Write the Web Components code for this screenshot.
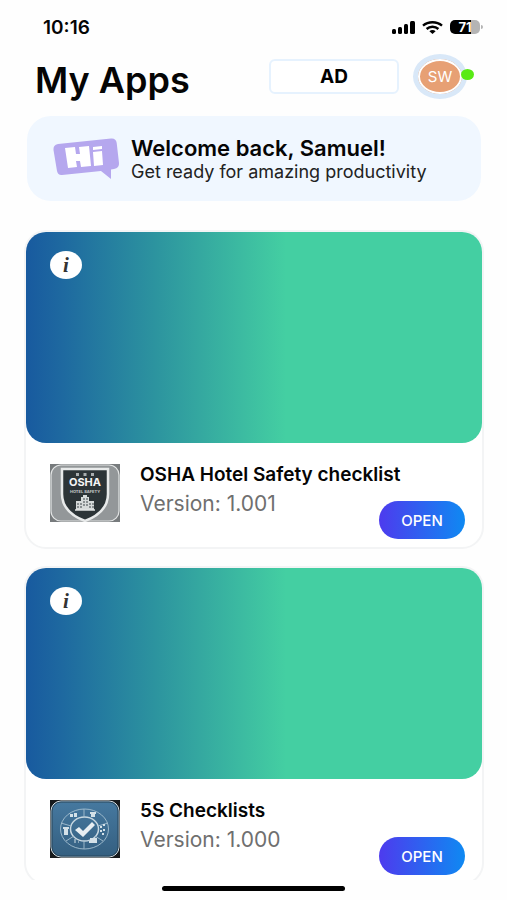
<!DOCTYPE html>
<html lang="en">
<head>
<meta charset="utf-8">
<meta name="viewport" content="width=device-width, initial-scale=1">
<title>My Apps</title>
<style>
    html, body {
        height: 100%;
        margin: 0;
    }
    body {
        background: #fefefe;
        color: #050505;
        font-family: Inter, "Liberation Sans", sans-serif;
    }
</style>
</head>
<body>
<apps-screen></apps-screen>
<script>
class PhoneStatus extends HTMLElement {
    constructor() {
        super();
        this.attachShadow({ mode: 'open' });
    }

    connectedCallback() {
        this.shadowRoot.innerHTML = `
            <style>
                :host {
                    display: flex;
                    align-items: center;
                    justify-content: space-between;
                    height: 52px;
                    padding: 2px 24px 0 43px;
                    box-sizing: border-box;
                }
                time {
                    font-size: 19px;
                    font-weight: 600;
                }
                .signals {
                    display: flex;
                    align-items: center;
                    gap: 7px;
                }
                svg {
                    display: block;
                }
                .battery {
                    display: flex;
                    align-items: center;
                }
                .level {
                    width: 30px;
                    height: 14px;
                    border-radius: 5px;
                    background: linear-gradient(to right, #000 71%, #b4b4b4 71%);
                    color: #fff;
                    font-size: 13px;
                    font-weight: 700;
                    line-height: 14px;
                    text-align: center;
                }
                .tip {
                    width: 2px;
                    height: 4px;
                    margin-left: 1px;
                    border-radius: 0 2px 2px 0;
                    background: #b4b4b4;
                }
            </style>
            <time>10:16</time>
            <div class="signals">
                <svg width="23" height="13" viewBox="0 0 23 13" aria-label="Signal">
                    <rect x="0" y="8" width="4" height="5" rx="1.5"/>
                    <rect x="6" y="6" width="4" height="7" rx="1.5"/>
                    <rect x="12" y="3" width="4" height="10" rx="1.5"/>
                    <rect x="18" y="0" width="5" height="13" rx="1.5"/>
                </svg>
                <svg width="21" height="13" viewBox="0 0 21 13" fill="none" stroke="#000" stroke-width="2.4" aria-label="Wi-Fi">
                    <path d="M1 4.6C6.3.1 14.7.1 20 4.6"/>
                    <path d="M4.6 8c3.3-3 8.5-3 11.8 0"/>
                    <path d="M7.4 10.2c1.7-1.5 4.5-1.5 6.2 0L10.5 13z" fill="#000" stroke="none"/>
                </svg>
                <div class="battery"><div class="level">71</div><div class="tip"></div></div>
            </div>
        `;
    }
}

class UserAvatar extends HTMLElement {
    constructor() {
        super();
        this.attachShadow({ mode: 'open' });
    }

    connectedCallback() {
        this.shadowRoot.innerHTML = `
            <style>
                :host {
                    display: block;
                    position: relative;
                }
                button {
                    display: block;
                    width: 54px;
                    height: 45px;
                    padding: 0;
                    border: 5px solid #d9e8f8;
                    border-radius: 50%;
                    background: #e7a074;
                    box-shadow: inset 0 0 0 2px #fff;
                    color: #fff;
                    font: 400 15px Inter, sans-serif;
                }
                .online {
                    position: absolute;
                    right: -7px;
                    top: 15px;
                    width: 13px;
                    height: 11px;
                    border-radius: 50%;
                    background: #59ea15;
                }
            </style>
            <button type="button" aria-label="Account"><slot></slot></button>
            <span class="online"></span>
        `;
    }
}

class AppsHeader extends HTMLElement {
    constructor() {
        super();
        this.attachShadow({ mode: 'open' });
    }

    connectedCallback() {
        this.shadowRoot.innerHTML = `
            <style>
                :host {
                    display: flex;
                    align-items: center;
                    padding: 0 40px 0 35px;
                }
                h1 {
                    flex: 1;
                    margin: 8px 0 0;
                    font-size: 36px;
                    line-height: 40px;
                    font-weight: 600;
                    white-space: nowrap;
                }
                .org {
                    width: 130px;
                    height: 35px;
                    margin-right: 14px;
                    border: 2px solid #e6f2fe;
                    border-radius: 6px;
                    background: #fff;
                    color: #000;
                    font: 700 19px Inter, sans-serif;
                }
            </style>
            <h1>My Apps</h1>
            <button class="org" type="button">AD</button>
            <user-avatar>SW</user-avatar>
        `;
    }
}

class WelcomeBanner extends HTMLElement {
    constructor() {
        super();
        this.attachShadow({ mode: 'open' });
    }

    connectedCallback() {
        this.shadowRoot.innerHTML = `
            <style>
                :host {
                    display: flex;
                    align-items: center;
                    gap: 11px;
                    height: 85px;
                    margin: 16px 26px 0 27px;
                    padding: 0 26px;
                    box-sizing: border-box;
                    border-radius: 24px;
                    background: #f0f7ff;
                }
                svg {
                    display: block;
                    flex: none;
                }
                .message {
                    padding-top: 3px;
                }
                h2, p {
                    margin: 0;
                    line-height: 24px;
                    white-space: nowrap;
                }
                h2 {
                    font-size: 22px;
                    font-weight: 600;
                }
                p {
                    color: #222;
                    font-size: 18px;
                }
            </style>
            <svg width="67" height="42" viewBox="0 0 67 42" aria-label="Hi">
                <path fill="#b5a7ee" d="M5 6 58 .5q5-.5 5.700 4.500L66 25q.5 5-5 6l-3 .5V41l-10-8L9 37q-4 .5-5-4L.5 12Q0 7 5 6z"/>
                <path fill="#fff" d="m12 10 10-1 1 7h4l-1-7 10-1 2 20-10 1-1-6h-4l1 6-9 1zM40 14l9-1 1 14-9 1zM40 9l9-1v3l-9 1z"/>
            </svg>
            <div class="message">
                <h2>Welcome back, Samuel!</h2>
                <p>Get ready for amazing productivity</p>
            </div>
        `;
    }
}

class AppCard extends HTMLElement {
    constructor() {
        super();
        this.attachShadow({ mode: 'open' });
    }

    connectedCallback() {
        this.shadowRoot.innerHTML = `
            <style>
                :host {
                    display: block;
                    flex: none;
                    border: 2px solid #f3f4f5;
                    border-radius: 22px;
                    background: #fff;
                }
                .cover {
                    height: 211px;
                    padding: 19px 24px;
                    box-sizing: border-box;
                    border-radius: 20px;
                    background: linear-gradient(to right, #185a9f 0%, #1e69a0 8%, #2c939f 28%, #44cfa2 57%);
                }
                .info {
                    display: block;
                    width: 32px;
                    height: 28px;
                    padding: 0;
                    border: 0;
                    border-radius: 50%;
                    background: #fff;
                    color: #333;
                    font: italic 700 21px/28px "Liberation Serif", serif;
                }
                .details {
                    display: grid;
                    grid-template-columns: 70px 1fr auto;
                    column-gap: 20px;
                    height: 104px;
                    padding: 21px 17px 8px 24px;
                    box-sizing: border-box;
                }
                .text {
                    grid-column: 2 / 4;
                    grid-row: 1;
                }
                h3, p {
                    margin: 0;
                    white-space: nowrap;
                }
                h3 {
                    font-size: 19px;
                    line-height: 22px;
                    font-weight: 600;
                }
                p {
                    margin-top: 4px;
                    color: #6f6f6f;
                    font-size: 21px;
                    line-height: 28px;
                }
                .open {
                    grid-column: 3;
                    grid-row: 1;
                    align-self: end;
                    width: 86px;
                    height: 38px;
                    padding: 0;
                    border: 0;
                    border-radius: 19px;
                    background: linear-gradient(to right, #4d3bee, #0f89f2);
                    color: #fff;
                    font: 500 15px Inter, sans-serif;
                }
            </style>
            <div class="cover"><button class="info" type="button" aria-label="Information">i</button></div>
            <div class="details">
                <slot name="icon"></slot>
                <div class="text">
                    <h3>${this.getAttribute('name')}</h3>
                    <p>Version: ${this.getAttribute('version')}</p>
                </div>
                <button class="open" type="button">OPEN</button>
            </div>
        `;
    }
}

class OshaIcon extends HTMLElement {
    constructor() {
        super();
        this.attachShadow({ mode: 'open' });
    }

    connectedCallback() {
        this.shadowRoot.innerHTML = `
            <style>
                :host, svg {
                    display: block;
                }
                text {
                    font-family: Inter, sans-serif;
                    font-weight: 700;
                    text-anchor: middle;
                    fill: #f4f5f5;
                }
            </style>
            <svg width="70" height="58" viewBox="0 0 70 58">
                <rect width="70" height="58" fill="#777b7d"/>
                <rect x="1" y="1" width="68" height="56" rx="10" fill="#939799" stroke="#e2e4e4" stroke-width="1.2"/>
                <path d="M12 5h46v25c0 14-10 22-23 27C22 52 12 44 12 30z" fill="#2c3437" stroke="#e8eaea" stroke-width="2.5"/>
                <path d="M26 9h3v3h-3zM33.5 9h3v3h-3zM41 9h3v3h-3z" fill="#a9aeb0"/>
                <text x="35" y="22" font-size="11">OSHA</text>
                <text x="35" y="29" font-size="4" opacity=".75">HOTEL SAFETY</text>
                <path d="M26 37h5v-4h2v-2h4v2h2v4h5v9H26z" fill="#d6dada"/>
                <path d="M28 39v5M31 39v5M34 34v9M37 34v9M40 39v5M43 39v5" stroke="#3c4548" stroke-dasharray="2 1"/>
                <path d="M25 46h20" stroke="#e0e3e3" stroke-width="1.5"/>
            </svg>
        `;
    }
}

class ChecklistIcon extends HTMLElement {
    constructor() {
        super();
        this.attachShadow({ mode: 'open' });
    }

    connectedCallback() {
        this.shadowRoot.innerHTML = `
            <style>
                :host, svg {
                    display: block;
                }
            </style>
            <svg width="70" height="58" viewBox="0 0 70 58">
                <defs>
                    <linearGradient id="steel" x1="0" y1="0" x2="0" y2="1">
                        <stop offset="0" stop-color="#4679a0"/>
                        <stop offset="1" stop-color="#345f80"/>
                    </linearGradient>
                </defs>
                <rect width="70" height="58" fill="#171a1c"/>
                <rect x="1" y="1" width="68" height="56" rx="10" fill="url(#steel)" stroke="#d8dfe3"/>
                <rect x="2" y="2" width="66" height="54" rx="9" fill="none" stroke="#29465a"/>
                <g fill="none" stroke="#a5c0d0" stroke-width=".9">
                    <ellipse cx="34.5" cy="29" rx="24" ry="20"/>
                    <ellipse cx="34.5" cy="29" rx="14" ry="12" stroke="#c8d8e1" stroke-width="1.5"/>
                    <path d="M34 9v8M34 41v8M11 23l10 3M58 23l-10 3M16 41l8-5M53 41l-8-5"/>
                </g>
                <path d="m25 30 4-3 4 4 9-9 3 3-12 12z" fill="#e7eef2"/>
                <g fill="#d4e1e8">
                    <path d="M13 27h6v2h-1v6h-4v-6h-1zM20 14h3v3h-3zM24 13h3v4h-3zM40 12h6v2h-1v3h-4v-3h-1zM40 38h7v5h-8v-2h1z"/>
                    <path d="M50 26h2v2h-2zM53 24h2v2h-2zM50 30h2v2h-2zM53 29h2v2h-2zM52 33h2v2h-2z"/>
                    <path d="M24 39h2v4h-2zM28 41h1v2h-1z" opacity=".5"/>
                </g>
            </svg>
        `;
    }
}

class AppsScreen extends HTMLElement {
    constructor() {
        super();
        this.attachShadow({ mode: 'open' });
    }

    connectedCallback() {
        this.shadowRoot.innerHTML = `
            <style>
                :host {
                    display: flex;
                    flex-direction: column;
                    height: 100vh;
                }
                main {
                    display: flex;
                    flex: 1;
                    flex-direction: column;
                    gap: 17px;
                    min-height: 0;
                    margin-top: 29px;
                    padding: 0 23px 0 24px;
                    overflow: hidden;
                }
                footer {
                    display: flex;
                    flex: none;
                    justify-content: center;
                    height: 14px;
                    padding-top: 6px;
                }
                .home {
                    width: 36%;
                    height: 5px;
                    border-radius: 3px;
                    background: #000;
                }
            </style>
            <phone-status></phone-status>
            <apps-header></apps-header>
            <welcome-banner></welcome-banner>
            <main>
                <app-card name="OSHA Hotel Safety checklist" version="1.001"><osha-icon slot="icon"></osha-icon></app-card>
                <app-card name="5S Checklists" version="1.000"><checklist-icon slot="icon"></checklist-icon></app-card>
            </main>
            <footer><div class="home"></div></footer>
        `;
    }
}

customElements.define('phone-status', PhoneStatus);
customElements.define('user-avatar', UserAvatar);
customElements.define('apps-header', AppsHeader);
customElements.define('welcome-banner', WelcomeBanner);
customElements.define('osha-icon', OshaIcon);
customElements.define('checklist-icon', ChecklistIcon);
customElements.define('app-card', AppCard);
customElements.define('apps-screen', AppsScreen);
</script>
</body>
</html>
